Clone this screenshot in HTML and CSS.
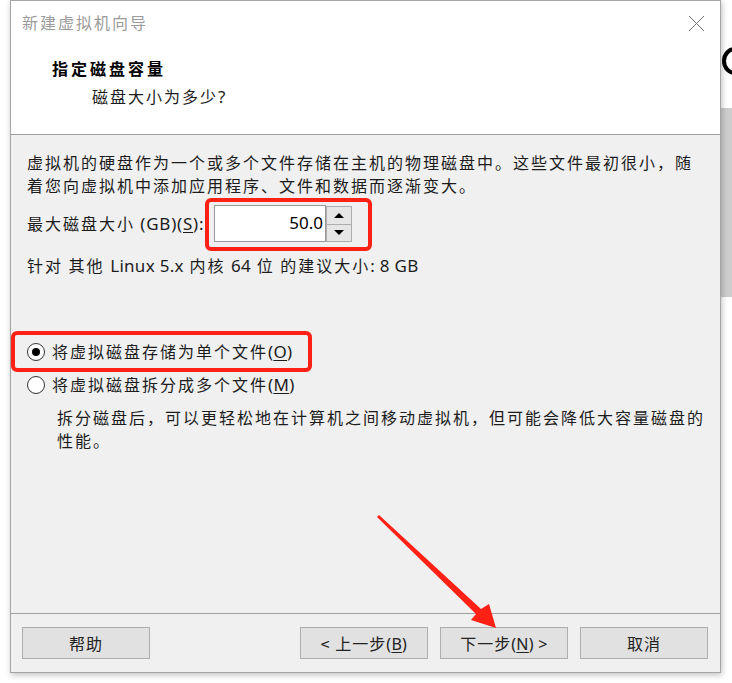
FILE: index.html
```html
<!DOCTYPE html>
<html>
<head>
    <title>新建虚拟机向导</title>
    <link rel="stylesheet" href="styles.css">
</head>
<body>
    <div class="stage">
        <div class="dialog">
            <div class="titlebar">
                <span class="title">新建虚拟机向导</span>
                <svg class="close" width="17" height="17" viewBox="0 0 17 17">
                    <path d="M1 1 L16 16 M16 1 L1 16" stroke="#6e6e6e" stroke-width="1" fill="none"/>
                </svg>
            </div>
            <div class="header">
                <div class="header-title">指定磁盘容量</div>
                <div class="header-sub">磁盘大小为多少<span class="lat">?</span></div>
            </div>
            <div class="content">
                <p class="intro">虚拟机的硬盘作为一个或多个文件存储在主机的物理磁盘中。这些文件最初很小，随<br>着您向虚拟机中添加应用程序、文件和数据而逐渐变大。</p>
                <div class="size-row">
                    <label class="size-label">最大磁盘大小<span class="lat"> (GB)(<u>S</u>):</span></label>
                    <div class="spin">
                        <div class="spin-input">50.0</div>
                        <div class="spin-btns">
                            <div class="spin-btn"><span class="tri-up"></span></div>
                            <div class="spin-btn"><span class="tri-down"></span></div>
                        </div>
                    </div>
                </div>
                <p class="hint">针对 其他 <span class="lat">Linux 5.x</span> 内核 <span class="lat">64</span> 位 的建议大小<span class="lat">: 8 GB</span></p>
                <div class="radio-row first">
                    <span class="radio checked"></span>
                    <span>将虚拟磁盘存储为单个文件<span class="lat">(<u>O</u>)</span></span>
                </div>
                <div class="radio-row">
                    <span class="radio"></span>
                    <span>将虚拟磁盘拆分成多个文件<span class="lat">(<u>M</u>)</span></span>
                </div>
                <p class="desc">拆分磁盘后，可以更轻松地在计算机之间移动虚拟机，但可能会降低大容量磁盘的<br>性能。</p>
            </div>
            <div class="footer">
                <button class="btn">帮助</button>
                <button class="btn push">&lt; 上一步<span class="lat">(<u>B</u>)</span></button>
                <button class="btn">下一步<span class="lat">(<u>N</u>) &gt;</span></button>
                <button class="btn">取消</button>
            </div>
        </div>

        <div class="backdrop">
            <div class="ring"></div>
            <div class="grey-block"></div>
        </div>

        <!-- annotations drawn over the screenshot -->
        <div class="mark mark-size"></div>
        <div class="mark mark-radio"></div>
        <svg class="arrow" width="732" height="683" viewBox="0 0 732 683">
            <polygon points="377,517 476,614 471,620 496,628 489,604 481,609 379,515" fill="#ff2116"/>
        </svg>
    </div>
</body>
</html>
```

FILE: styles.css
```css
* {
    margin: 0;
    padding: 0;
    box-sizing: border-box;
}

body {
    background-color: #ffffff;
    font-family: "Noto Sans CJK SC", sans-serif;
    font-size: 16px;
    letter-spacing: 2px;
    color: #1c1c1c;
    overflow: hidden;
}

.lat {
    font-family: "Noto Sans", "Noto Sans CJK SC", sans-serif;
    font-size: 17px;
    letter-spacing: 0.3px;
}

u {
    text-underline-offset: 2px;
}

.stage {
    position: relative;
    width: 732px;
    height: 683px;
    display: flex;
}

.dialog {
    margin-left: 10px;
    width: 711px;
    height: 673px;
    border: 1px solid #a6a6a6;
    background-color: #f0f0f0;
    display: flex;
    flex-direction: column;
    box-shadow: 1px 2px 6px rgba(0, 0, 0, 0.25);
    position: relative;
    z-index: 1;
}

.titlebar {
    height: 44px;
    background-color: #ffffff;
    display: flex;
    justify-content: space-between;
    align-items: center;
    padding: 0 15px 2px 11px;
}

.title {
    color: #9b9b9b;
    line-height: 20px;
}

.close {
    margin-top: 2px;
}

.header {
    height: 90px;
    background-color: #ffffff;
    border-bottom: 1px solid #a0a0a0;
    padding: 11px 0 0 41px;
}

.header-title {
    font-weight: 700;
    letter-spacing: 3px;
    line-height: 24px;
    color: #000000;
}

.header-sub {
    margin-top: 4px;
    margin-left: 40px;
    line-height: 24px;
}

.content {
    flex: 1;
    padding: 16px 16px 0 16px;
    white-space: nowrap;
}

.intro {
    line-height: 23px;
}

.size-row {
    margin-top: 8px;
    display: flex;
    align-items: center;
    height: 37px;
}

.size-label {
    width: 187px;
    line-height: 23px;
}

.size-label .lat {
    letter-spacing: 0.8px;
}

.spin {
    display: flex;
    align-items: flex-start;
    height: 37px;
}

.spin-input {
    width: 112px;
    height: 37px;
    background-color: #ffffff;
    border: 1px solid #9a9a9a;
    font-family: "Noto Sans", sans-serif;
    font-size: 17px;
    letter-spacing: 0;
    color: #000000;
    text-align: right;
    padding-right: 2px;
    line-height: 34px;
}

.spin-btns {
    width: 26px;
    height: 36px;
    margin-top: 1px;
    border: 1px solid #adadad;
    display: flex;
    flex-direction: column;
}

.spin-btn {
    flex: 1;
    background-color: #e6e6e6;
    display: flex;
    justify-content: center;
    align-items: center;
}

.spin-btn + .spin-btn {
    border-top: 1px solid #adadad;
}

.tri-up {
    width: 0;
    height: 0;
    border-left: 5px solid transparent;
    border-right: 5px solid transparent;
    border-bottom: 5px solid #000000;
}

.tri-down {
    width: 0;
    height: 0;
    border-left: 5px solid transparent;
    border-right: 5px solid transparent;
    border-top: 5px solid #000000;
}

.hint {
    margin-top: 12px;
    line-height: 23px;
}

.radio-row {
    display: flex;
    align-items: center;
    gap: 7px;
    line-height: 23px;
    margin-top: 10px;
}

.radio-row.first {
    margin-top: 63px;
}

.radio {
    width: 18px;
    height: 18px;
    border: 1px solid #333333;
    border-radius: 50%;
    background-color: #ffffff;
    display: flex;
    justify-content: center;
    align-items: center;
}

.radio.checked::after {
    content: "";
    width: 8px;
    height: 8px;
    border-radius: 50%;
    background-color: #000000;
}

.desc {
    margin-top: 10px;
    margin-left: 30px;
    line-height: 23px;
}

.footer {
    height: 59px;
    border-top: 1px solid #a0a0a0;
    padding: 13px 12px 0 11px;
    display: flex;
    align-items: flex-start;
    gap: 12px;
}

.btn {
    width: 128px;
    height: 32px;
    background-color: #e1e1e1;
    border: 1px solid #adadad;
    font-family: "Noto Sans CJK SC", sans-serif;
    font-size: 16px;
    letter-spacing: 1px;
    color: #222222;
    line-height: 28px;
}

.btn .lat {
    font-size: 16px;
}

.btn.push {
    margin-left: auto;
}

.backdrop {
    flex: 1;
    display: flex;
    flex-direction: column;
    overflow: hidden;
}

.ring {
    margin-top: 47px;
    margin-left: 1px;
    width: 26px;
    height: 28px;
    border: 4px solid #000000;
    border-radius: 50%;
}

.grey-block {
    margin-top: 33px;
    height: 189px;
    background-color: #cdcdcd;
}

.mark {
    position: absolute;
    border: 4px solid #ff2116;
    border-radius: 6px;
    z-index: 2;
}

.mark-size {
    left: 205px;
    top: 198px;
    width: 167px;
    height: 53px;
}

.mark-radio {
    left: 11px;
    top: 331px;
    width: 301px;
    height: 41px;
}

.arrow {
    position: absolute;
    left: 0;
    top: 0;
    z-index: 3;
}
```
